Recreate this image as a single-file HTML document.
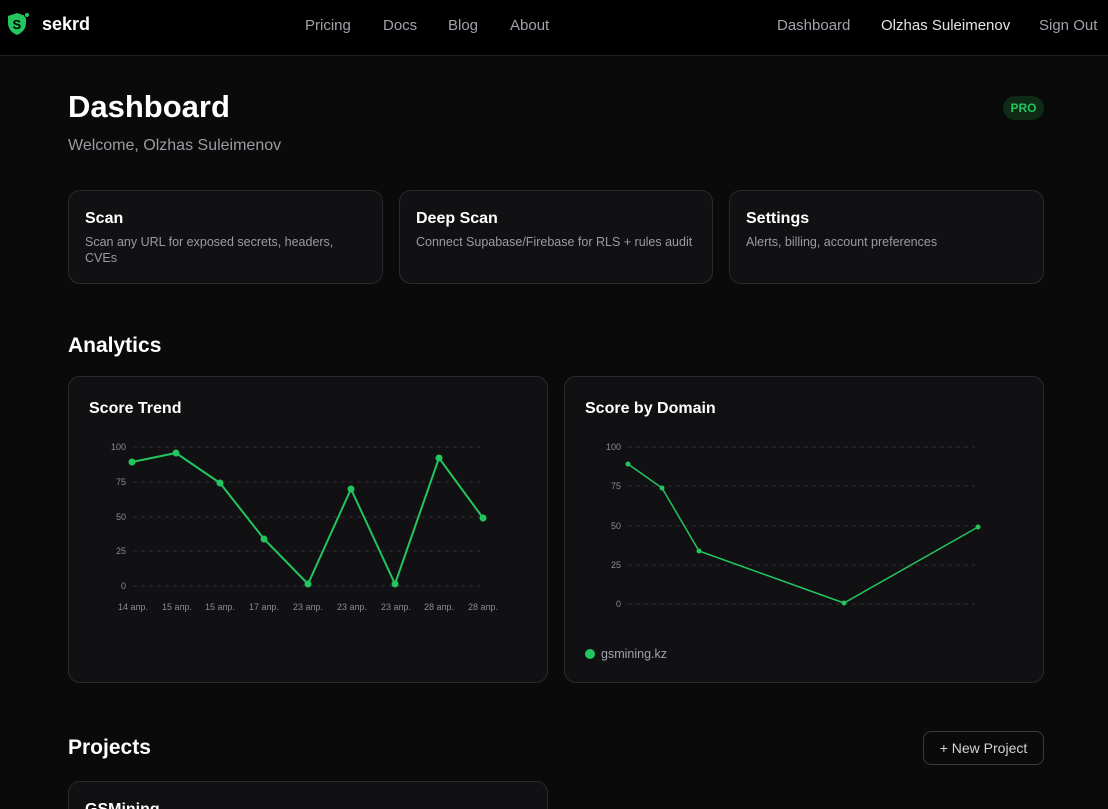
<!DOCTYPE html>
<html><head><meta charset="utf-8"><style>
*{margin:0;padding:0;box-sizing:border-box}
html,body{width:1108px;height:809px;overflow:hidden}
body{background:#0a0a0a;font-family:"Liberation Sans",sans-serif;color:#fff;position:relative}
.nav{position:absolute;top:0;left:0;width:1108px;height:56px;background:#000;border-bottom:1px solid #1c1c1e}
.nav a{position:absolute;top:17px;font-size:15px;color:#a1a1aa;text-decoration:none}
.card{position:absolute;background:#111113;border:1px solid #2a2a2e;border-radius:12px}
.card h3{font-size:16px;font-weight:700;color:#fff}
.card p{font-size:12.5px;color:#9a9aa2;line-height:16px;margin-top:6px}
h2{position:absolute;font-size:21px;font-weight:700}
svg text{font-family:"Liberation Sans",sans-serif;font-size:9px;fill:#8a8a92}
</style></head><body>
<div class="nav">
<svg style="position:absolute;left:7px;top:12px" width="24" height="24" viewBox="0 0 24 24"><path d="M10 1 L19 4 V11 C19 17 15 21 10 23 C5 21 1 17 1 11 V4 Z" fill="#22c55e"/><text x="5.5" y="17" style="font-size:13px;font-weight:700;fill:#000">S</text><circle cx="20" cy="3" r="3" fill="#000"/><circle cx="20" cy="3" r="2" fill="#22c55e"/></svg>
<div style="position:absolute;left:42px;top:14px;font-size:18px;font-weight:700;color:#fff">sekrd</div>
<a style="left:305px">Pricing</a><a style="left:383px">Docs</a><a style="left:448px">Blog</a><a style="left:510px">About</a>
<a style="left:777px">Dashboard</a><a style="left:881px;color:#e4e4e7">Olzhas Suleimenov</a><a style="left:1039px">Sign Out</a>
</div>
<div style="position:absolute;left:68px;top:89px;font-size:31px;font-weight:700">Dashboard</div>
<div style="position:absolute;left:68px;top:137px;font-size:16px;color:#9a9aa2">Welcome, Olzhas Suleimenov</div>
<div style="position:absolute;left:1003px;top:96px;width:41px;height:24px;border-radius:12px;background:#0f2a17;color:#22c55e;font-size:12px;font-weight:700;text-align:center;line-height:24px">PRO</div>
<div class="card" style="left:68px;top:190px;width:315px;height:94px;padding:19px 16px"><h3>Scan</h3><p>Scan any URL for exposed secrets, headers, CVEs</p></div>
<div class="card" style="left:399px;top:190px;width:314px;height:94px;padding:19px 16px"><h3>Deep Scan</h3><p>Connect Supabase/Firebase for RLS + rules audit</p></div>
<div class="card" style="left:729px;top:190px;width:315px;height:94px;padding:19px 16px"><h3>Settings</h3><p>Alerts, billing, account preferences</p></div>
<h2 style="left:68px;top:334px">Analytics</h2>
<div class="card" style="left:68px;top:376px;width:480px;height:307px"></div>
<div class="card" style="left:564px;top:376px;width:480px;height:307px"></div>
<div style="position:absolute;left:89px;top:400px;font-size:16px;font-weight:700">Score Trend</div>
<div style="position:absolute;left:585px;top:400px;font-size:16px;font-weight:700">Score by Domain</div>
<svg style="position:absolute;left:0;top:0" width="1108" height="809">
<g stroke="#2e2e33" stroke-dasharray="4 4" stroke-width="1">
<line x1="133" y1="447" x2="480" y2="447"/><line x1="133" y1="482" x2="480" y2="482"/><line x1="133" y1="517" x2="480" y2="517"/><line x1="133" y1="551" x2="480" y2="551"/><line x1="133" y1="586" x2="480" y2="586"/>
<line x1="628" y1="447" x2="975" y2="447"/><line x1="628" y1="486" x2="975" y2="486"/><line x1="628" y1="526" x2="975" y2="526"/><line x1="628" y1="565" x2="975" y2="565"/><line x1="628" y1="604" x2="975" y2="604"/>
</g>
<g text-anchor="end"><text x="126" y="450">100</text><text x="126" y="485">75</text><text x="126" y="520">50</text><text x="126" y="554">25</text><text x="126" y="589">0</text>
<text x="621" y="450">100</text><text x="621" y="489">75</text><text x="621" y="529">50</text><text x="621" y="568">25</text><text x="621" y="607">0</text></g>
<g text-anchor="middle" style="font-size:8.5px"><text x="133" y="610">14 апр.</text><text x="177" y="610">15 апр.</text><text x="220" y="610">15 апр.</text><text x="264" y="610">17 апр.</text><text x="308" y="610">23 апр.</text><text x="352" y="610">23 апр.</text><text x="396" y="610">23 апр.</text><text x="439" y="610">28 апр.</text><text x="483" y="610">28 апр.</text></g>
<polyline fill="none" stroke="#22c55e" stroke-width="2" points="132,462 176,453 220,483 264,539 308,584 351,489 395,584 439,458 483,518"/>
<g fill="#22c55e"><circle cx="132" cy="462" r="3.5"/><circle cx="176" cy="453" r="3.5"/><circle cx="220" cy="483" r="3.5"/><circle cx="264" cy="539" r="3.5"/><circle cx="308" cy="584" r="3.5"/><circle cx="351" cy="489" r="3.5"/><circle cx="395" cy="584" r="3.5"/><circle cx="439" cy="458" r="3.5"/><circle cx="483" cy="518" r="3.5"/></g>
<polyline fill="none" stroke="#22c55e" stroke-width="1.5" points="628,464 662,488 699,551 844,603 978,527"/>
<g fill="#22c55e"><circle cx="628" cy="464" r="2.5"/><circle cx="662" cy="488" r="2.5"/><circle cx="699" cy="551" r="2.5"/><circle cx="844" cy="603" r="2.5"/><circle cx="978" cy="527" r="2.5"/><circle cx="590" cy="654" r="5"/></g>
<text x="601" y="658" style="font-size:12.5px;fill:#a1a1aa">gsmining.kz</text>
</svg>
<h2 style="left:68px;top:736px">Projects</h2>
<div style="position:absolute;left:923px;top:731px;width:121px;height:34px;border:1px solid #3a3a3f;border-radius:8px;font-size:14px;color:#d4d4d8;text-align:center;line-height:32px">+ New Project</div>
<div class="card" style="left:68px;top:781px;width:480px;height:60px;padding:19px 16px"><h3>GSMining</h3></div>
</body></html>
